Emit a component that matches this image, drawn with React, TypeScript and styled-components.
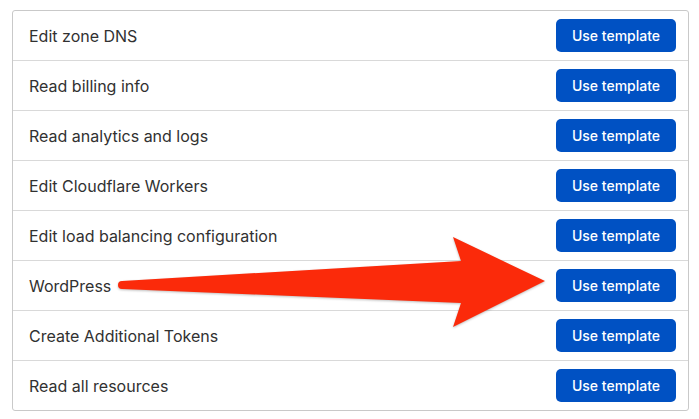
import React from "react";
import styled, { createGlobalStyle } from "styled-components";

const templates: string[] = [
    "Edit zone DNS",
    "Read billing info",
    "Read analytics and logs",
    "Edit Cloudflare Workers",
    "Edit load balancing configuration",
    "WordPress",
    "Create Additional Tokens",
    "Read all resources",
];

const App: React.FC = () => {
    return (
        <>
            <GlobalStyle />
            <Page>
                <TemplateList>
                    {templates.map((name) => (
                        <TemplateRow key={name}>
                            <TemplateName>{name}</TemplateName>
                            <UseButton type="button">Use template</UseButton>
                        </TemplateRow>
                    ))}
                </TemplateList>
                <Arrow width="699" height="419" viewBox="0 0 699 419">
                    <path
                        d="M122 281 L461 261 L453 237 L545 281 L453 327 L461 303 L122 289 A4 4 0 0 1 122 281 Z"
                        fill="#fb2a0a"
                    />
                </Arrow>
            </Page>
        </>
    );
};

const GlobalStyle = createGlobalStyle`
    html, body {
        margin: 0;
        padding: 0;
        background: #ffffff;
    }
`;

const Page = styled.div`
    position: relative;
    width: 699px;
    height: 419px;
    padding: 10px 0 0 12px;
    box-sizing: border-box;
    font-family: Inter, "Liberation Sans", Arial, sans-serif;
`;

const TemplateList = styled.div`
    width: 677px;
    box-sizing: border-box;
    border: 1px solid #c9c9c9;
    border-radius: 3px;
    display: flex;
    flex-direction: column;
`;

const TemplateRow = styled.div`
    display: flex;
    align-items: center;
    justify-content: space-between;
    height: 49px;
    padding: 0 12px 0 16px;
    border-bottom: 1px solid #d9d9d9;

    &:last-child {
        border-bottom: none;
    }
`;

const TemplateName = styled.span`
    font-size: 16px;
    color: #313131;
`;

const UseButton = styled.button`
    width: 120px;
    height: 33px;
    border: none;
    border-radius: 5px;
    background: #0051c3;
    color: #ffffff;
    font-family: Inter, "Liberation Sans", sans-serif;
    font-size: 14px;
    font-weight: 500;
    cursor: pointer;
`;

const Arrow = styled.svg`
    position: absolute;
    left: 0;
    top: 0;
    pointer-events: none;
    filter: drop-shadow(0 1px 1px rgba(0, 0, 0, 0.25));
`;

export default App;
